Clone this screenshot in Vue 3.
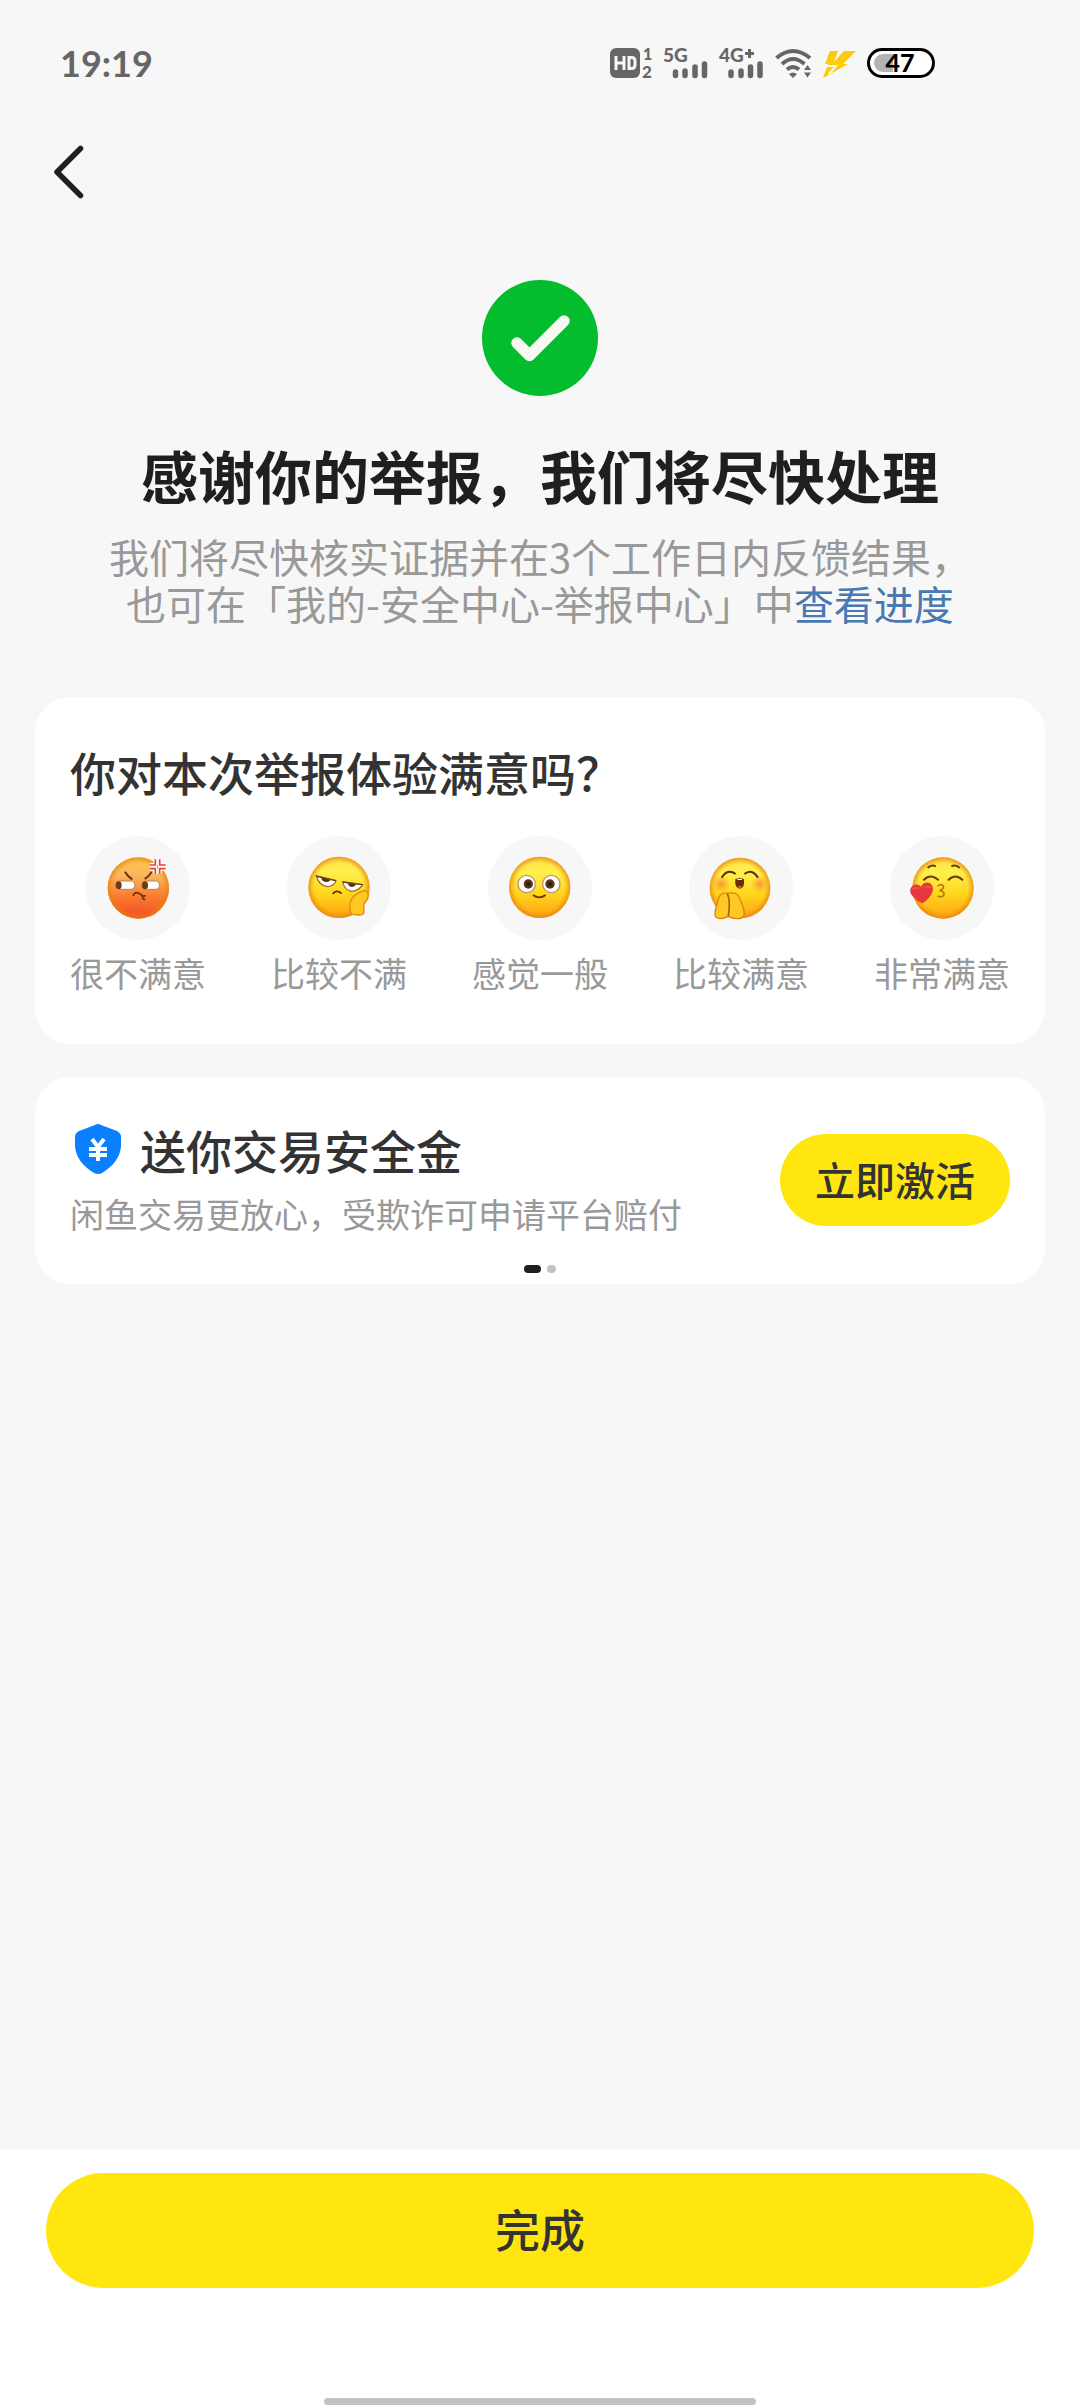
<script setup>
import { ref } from 'vue'

const ratings = [
  { id: 'angry', label: '很不满意', box: '79 46 312 312' },
  { id: 'bored', label: '比较不满', box: '681 46 312 312' },
  { id: 'plain', label: '感觉一般', box: '84 46 312 312' },
  { id: 'glad', label: '比较满意', box: '689 46 312 312' },
  { id: 'love', label: '非常满意', box: '90 46 312 312' }
]
const selected = ref('')
</script>

<template>
  <div class="page">
    <header>
      <div class="status">
        <span class="time">19:19</span>
        <div class="status-icons">
          <svg width="42" height="34" viewBox="0 0 42 34">
            <rect x="0" y="2" width="30" height="30" rx="6" fill="#666" />
            <path d="M6 10V24M14 10V24M6 17H14M19 11.500H21.500Q25 11.500 25 15V19Q25 22.500 21.500 22.500H19Z" fill="none" stroke="#f7f7f7" stroke-width="3" />
            <text x="33" y="14" font-size="16">1</text>
            <text x="32" y="32" font-size="17">2</text>
          </svg>
          <svg width="45" height="34" viewBox="0 0 45 34">
            <text x="0" y="16" font-size="19">5G</text>
            <path d="M12.500 26V29.500M22 25V29.500M32 21V29.500M41.500 18V29.500" stroke="#666" stroke-width="5.500" stroke-linecap="round" />
          </svg>
          <svg width="45" height="34" viewBox="0 0 45 34">
            <text x="0" y="16" font-size="19">4G</text>
            <path d="M26 7.500H35M30.500 3V12" stroke="#666" stroke-width="3" />
            <path d="M12 26V29.500M22 25V29.500M31.500 21V29.500M41 18V29.500" stroke="#666" stroke-width="5.500" stroke-linecap="round" />
          </svg>
          <svg width="37" height="34" viewBox="0 0 37 34">
            <path d="M1.500 12Q18 -2 35 12M7 18Q18 8 29.500 18M12 23.500Q18 18.500 24 23.500" fill="none" stroke="#666" stroke-width="4" />
            <path d="M14 28Q18 25 22 28L18 32Z" fill="#666" />
            <path d="M29 24L32.500 19L36 24ZM29 26.500H36L32.500 31.500Z" fill="#666" />
          </svg>
          <svg width="33" height="34" viewBox="0 0 33 34">
            <path d="M7 5H15L11 16L21 5H33L20 18H25L0 32L5 18H2Z" fill="#fdcb08" />
            <path d="M3 20H13L6 28" fill="none" stroke="#f7f7f7" stroke-width="2" />
          </svg>
          <svg width="68" height="34" viewBox="0 0 68 34">
            <rect x="1.500" y="3.500" width="65" height="27" rx="13.500" fill="#fff" stroke="#000" stroke-width="3" />
            <path d="M26 8V26H16A9 9 0 0 1 16 8Z" fill="#b4b4b4" />
            <text x="33" y="26" font-size="25" class="charge" text-anchor="middle">47</text>
          </svg>
        </div>
      </div>
      <nav>
        <button class="back" type="button" aria-label="返回">
          <svg width="34" height="60" viewBox="0 0 34 60">
            <path d="M28.500 6.500L5 30L28.500 53.500" fill="none" stroke="#1f1f1f" stroke-width="5.500" stroke-linecap="round" stroke-linejoin="round" />
          </svg>
        </button>
      </nav>
    </header>

    <main>
      <section class="result">
        <svg width="116" height="116" viewBox="0 0 116 116">
          <circle cx="58" cy="58" r="58" fill="#03bd2e" />
          <path d="M35 63L47.500 75.500L82 41" fill="none" stroke="#f9f9f4" stroke-width="11.500" stroke-linecap="round" stroke-linejoin="round" />
        </svg>
        <h1>感谢你的举报，我们将尽快处理</h1>
        <p>我们将尽快核实证据并在3个工作日内反馈结果，<br>也可在「我的-安全中心-举报中心」中<a href="#">查看进度</a></p>
      </section>

      <section class="card survey">
        <h2>你对本次举报体验满意吗？</h2>
        <div class="ratings">
          <button v-for="r in ratings" :key="r.id" type="button" class="rating" :aria-pressed="selected === r.id" @click="selected = r.id">
            <svg class="face" :viewBox="r.box">
              <defs>
                <linearGradient :id="r.id + '-skin'" x1="0" y1="0" x2="0" y2="1">
                  <template v-if="r.id === 'angry'">
                    <stop offset="0" stop-color="#fcc552" />
                    <stop offset="0.300" stop-color="#fbb55c" />
                    <stop offset="0.650" stop-color="#f9792f" />
                    <stop offset="1" stop-color="#ee4a28" />
                  </template>
                  <template v-else>
                    <stop offset="0" stop-color="#ffe045" />
                    <stop offset="0.250" stop-color="#fff04e" />
                    <stop offset="0.600" stop-color="#ffd51c" />
                    <stop offset="1" stop-color="#fca313" />
                  </template>
                </linearGradient>
                <radialGradient :id="r.id + '-rim'">
                  <stop offset="0.800" stop-color="#ee8c0c" stop-opacity="0" />
                  <stop offset="1" stop-color="#e77e0e" stop-opacity="0.750" />
                </radialGradient>
                <radialGradient :id="r.id + '-blush'">
                  <stop offset="0" stop-color="#fb7430" stop-opacity="0.700" />
                  <stop offset="1" stop-color="#fb8430" stop-opacity="0" />
                </radialGradient>
              </defs>

              <template v-if="r.id === 'angry'">
                <circle cx="236" cy="202" r="92" fill="url(#angry-skin)" />
                <circle cx="236" cy="202" r="92" fill="url(#angry-rim)" />
                <path d="M196 153Q203 166 218 176M276 153Q270 166 255 175" fill="none" stroke="#69390c" stroke-width="6" />
                <path d="M178 181H216Q226 184 226 193Q226 204 215 206H178Q168 203 168 193Q168 184 178 181ZM257 181H290Q300 184 300 193Q300 203 290 206H257Q246 202 246 193Q246 184 257 181Z" fill="#fff" stroke="#b98560" stroke-width="3" />
                <ellipse cx="177" cy="194" rx="9" ry="12" fill="#6c3d11" />
                <ellipse cx="256" cy="194" rx="9" ry="12" fill="#6c3d11" />
                <path d="M220 226Q225 213 236 217Q247 222 249 227L258 225M249 227Q246 233 256 237" fill="none" stroke="#6d310d" stroke-width="5" />
                <g fill="none" stroke-linejoin="round">
                  <path d="M287 116V133H271M300 116V133H318M287 160V144H271M300 160V144H318" stroke="#fff" stroke-width="12" />
                  <path d="M287 116V133H271M300 116V133H318M287 160V144H271M300 160V144H318" stroke="#e34237" stroke-width="5" />
                </g>
              </template>

              <template v-if="r.id === 'bored'">
                <circle cx="837" cy="200" r="92" fill="url(#bored-skin)" />
                <circle cx="837" cy="200" r="92" fill="url(#bored-rim)" />
                <path d="M769 166L828 180Q823 196 803 198Q777 195 769 166Z" fill="#fff" stroke="#927038" stroke-width="4" />
                <path d="M848 184L908 192Q896 212 873 212Q852 205 848 184Z" fill="#fff" stroke="#927038" stroke-width="4" />
                <path d="M783 170L812 177Q808 185 797 184Q785 182 783 170ZM863 186L888 190Q885 199 875 199Q865 197 863 186Z" fill="#5b310b" />
                <path d="M768 166L828 180M848 184L908 192" stroke="#6f4a18" stroke-width="4" />
                <path d="M818 220Q829 205 845 219" fill="none" stroke="#5d330b" stroke-width="5" />
                <path d="M875 281Q862 255 877 231Q894 213 916 209Q928 213 923 235L911 250L912 274Q911 283 899 283Z" fill="#ffc923" stroke="#e3880d" stroke-width="4" />
              </template>

              <template v-if="r.id === 'plain'">
                <circle cx="239" cy="200" r="92" fill="url(#plain-skin)" />
                <circle cx="239" cy="200" r="92" fill="url(#plain-rim)" />
                <circle cx="200" cy="190" r="26" fill="#fff" stroke="#bd9870" stroke-width="4" />
                <circle cx="274" cy="190" r="26" fill="#fff" stroke="#bd9870" stroke-width="4" />
                <circle cx="205" cy="190" r="14" fill="#573412" />
                <circle cx="270" cy="190" r="14" fill="#573412" />
                <circle cx="205" cy="190" r="6" fill="#2b1a0b" />
                <circle cx="270" cy="190" r="6" fill="#2b1a0b" />
                <path d="M219 223Q238 237 257 223" fill="none" stroke="#6b3409" stroke-width="5" />
              </template>

              <template v-if="r.id === 'glad'">
                <circle cx="842" cy="202" r="91" fill="url(#glad-skin)" />
                <circle cx="842" cy="202" r="91" fill="url(#glad-rim)" />
                <circle cx="786" cy="190" r="27" fill="url(#glad-blush)" />
                <circle cx="902" cy="190" r="27" fill="url(#glad-blush)" />
                <path d="M787 171Q804 142 829 160M855 160Q878 142 896 171" fill="none" stroke="#56310b" stroke-width="6" />
                <path d="M828 176Q841 167 854 176Q857 204 841 204Q825 202 828 176Z" fill="#682d10" />
                <path d="M834 174H848V178H834Z" fill="#fff" />
                <path d="M834 199Q841 192 849 199Q841 205 834 199Z" fill="#e0592c" />
                <path d="M806 287Q788 298 772 291Q764 286 769 265L779 229Q786 215 804 218Q819 214 832 220Q839 224 853 265Q858 286 847 292Q825 297 806 287Z" fill="#ffc925" stroke="#da8310" stroke-width="4" />
                <path d="M804 219Q814 239 807 286" fill="none" stroke="#a95a0c" stroke-width="5" />
              </template>

              <template v-if="r.id === 'love'">
                <circle cx="249" cy="202" r="92" fill="url(#love-skin)" />
                <circle cx="249" cy="202" r="92" fill="url(#love-rim)" />
                <path d="M203 142Q214 130 228 137M274 137Q287 130 299 142M190 179Q211 156 236 179M264 179Q286 156 309 179" fill="none" stroke="#65400c" stroke-width="6" />
                <path d="M232 197Q244 188 250 196Q252 206 239 209Q256 213 251 224Q244 232 233 226" fill="none" stroke="#b77908" stroke-width="5" />
                <path d="M187 248Q166 240 153 220Q146 204 158 195Q173 187 183 198Q192 182 209 187Q222 195 218 212Q211 234 187 248Z" fill="#e8383d" />
                <path d="M159 206Q166 198 174 203M195 200Q203 194 209 201" fill="none" stroke="#ee5450" stroke-width="5" stroke-linecap="round" />
              </template>
            </svg>
            <span>{{ r.label }}</span>
          </button>
        </div>
      </section>

      <section class="card promo">
        <div class="promo-row">
          <div>
            <h2>
              <svg width="56" height="52" viewBox="0 0 56 52">
                <path d="M25 2Q28 0 31 2L47 8Q51 10 51 14V23Q50 39 32 50Q28 52 24 50Q6 39 5 23V14Q5 10 9 8Z" fill="#0a80ff" />
                <path d="M22 16L28 24L34 16M19 26H37M19 32H37M28 24V38" fill="none" stroke="#fff" stroke-width="4" />
              </svg>
              送你交易安全金
            </h2>
            <p>闲鱼交易更放心，受欺诈可申请平台赔付</p>
          </div>
          <button type="button" class="activate">立即激活</button>
        </div>
        <div class="dots"><i class="on"></i><i></i></div>
      </section>
    </main>

    <footer>
      <button type="button" class="done">完成</button>
      <div class="home-bar"></div>
    </footer>
  </div>
</template>

<style>
body {
  margin: 0;
  background: #f7f7f7;
}
</style>

<style scoped>
.page {
  display: flex;
  flex-direction: column;
  min-height: 100vh;
  background: #f7f7f7;
  color: #333;
  font-family: "Noto Sans CJK SC", sans-serif;
}
svg {
  display: block;
  flex: none;
}
button {
  border: 0;
  padding: 0;
  background: none;
  color: inherit;
  font-family: inherit;
  cursor: pointer;
}
h1, h2, p {
  margin: 0;
}
.status {
  display: flex;
  align-items: center;
  justify-content: space-between;
  height: 126px;
  padding: 0 145px 0 60px;
  box-sizing: border-box;
}
.time {
  color: #666;
  font-family: Lato, sans-serif;
  font-size: 36px;
  font-weight: 700;
}
.status-icons {
  display: flex;
  gap: 11px;
}
.status-icons svg {
  overflow: visible;
}
.status-icons text {
  fill: #666;
  font-family: Lato, sans-serif;
  font-weight: 900;
}
.status-icons .charge {
  fill: #000;
}
nav {
  display: flex;
  align-items: center;
  height: 92px;
  padding: 0 52px;
}
.result {
  display: flex;
  flex-direction: column;
  align-items: center;
  padding-top: 62px;
  text-align: center;
}
h1 {
  margin-top: 38px;
  color: #1f1f1f;
  font-size: 57px;
  font-weight: 700;
  line-height: 80px;
}
.result p {
  margin-top: 19px;
  color: #999;
  font-size: 40px;
  line-height: 47px;
}
a {
  color: #4a78b0;
  text-decoration: none;
}
.card {
  margin: 0 35px;
  padding: 0 35px;
  border-radius: 36px;
  background: #fff;
}
h2 {
  display: flex;
  align-items: center;
  gap: 14px;
  font-size: 46px;
  font-weight: 500;
  line-height: 60px;
}
.survey {
  margin-top: 70px;
  padding-top: 44px;
  padding-bottom: 51px;
}
.ratings {
  display: flex;
  justify-content: space-between;
  margin-top: 35px;
}
.rating {
  display: flex;
  flex-direction: column;
  align-items: center;
  gap: 13px;
  color: #999;
  font-size: 34px;
  line-height: 40px;
}
.face {
  width: 104px;
  height: 104px;
  border-radius: 50%;
  background: #f7f7f7;
}
.promo {
  margin-top: 33px;
  padding-top: 42px;
  padding-bottom: 11px;
}
.promo-row {
  display: flex;
  align-items: center;
  justify-content: space-between;
}
.promo p {
  margin-top: 15px;
  color: #999;
  font-size: 34px;
  line-height: 40px;
}
.activate {
  width: 230px;
  height: 92px;
  margin-top: 6px;
  padding-bottom: 2px;
  border-radius: 46px;
  background: #ffe60f;
  font-size: 40px;
  font-weight: 500;
}
.dots {
  display: flex;
  justify-content: center;
  gap: 6px;
  margin-top: 31px;
}
.dots i {
  width: 9px;
  height: 8px;
  border-radius: 4px;
  background: #c4c4c4;
}
.dots .on {
  width: 17px;
  background: #1f1f1f;
}
footer {
  display: flex;
  flex-direction: column;
  margin-top: auto;
  padding: 23px 46px 3px;
  background: #fff;
}
.done {
  height: 115px;
  padding-bottom: 4px;
  border-radius: 58px;
  background: #ffe60f;
  font-size: 45px;
  font-weight: 500;
}
.home-bar {
  align-self: center;
  width: 40vw;
  height: 7px;
  margin-top: 110px;
  border-radius: 4px;
  background: #c2c2c2;
}
</style>
